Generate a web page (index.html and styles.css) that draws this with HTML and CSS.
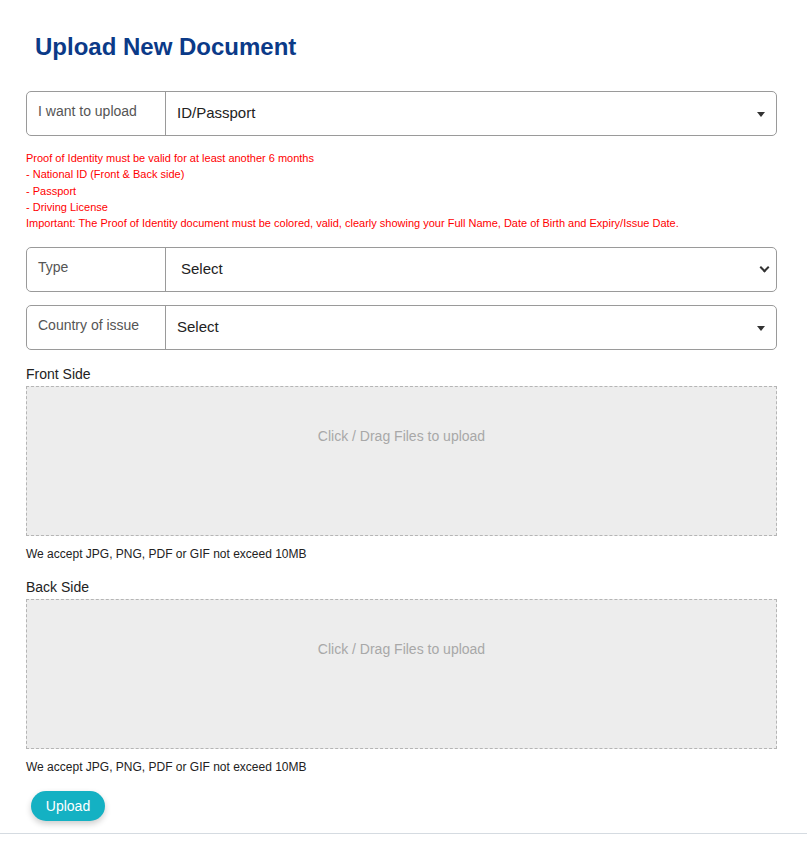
FILE: index.html
```html
<!DOCTYPE html>
<html lang="en">
<head>
    <meta charset="UTF-8">
    <meta name="viewport" content="width=device-width, initial-scale=1.0">
    <title>Upload New Document</title>
    <link rel="stylesheet" href="styles.css">
</head>
<body>
    <div class="page">
        <h1 class="title">Upload New Document</h1>

        <form class="upload-form">
            <!-- DOCUMENT KIND -->
            <div class="input-group">
                <span class="input-label">I want to upload</span>
                <div class="select-wrap caret">
                    <select class="select-plain">
                        <option>ID/Passport</option>
                        <option>Proof of Address</option>
                    </select>
                </div>
            </div>

            <div class="notice">
                <p>Proof of Identity must be valid for at least another 6 months</p>
                <p>- National ID (Front &amp; Back side)</p>
                <p>- Passport</p>
                <p>- Driving License</p>
                <p>Important: The Proof of Identity document must be colored, valid, clearly showing your Full Name, Date of Birth and Expiry/Issue Date.</p>
            </div>

            <div class="input-group">
                <span class="input-label">Type</span>
                <div class="select-wrap chevron">
                    <select class="select-plain select-native">
                        <option>Select</option>
                        <option>National ID</option>
                        <option>Passport</option>
                        <option>Driving License</option>
                    </select>
                </div>
            </div>

            <div class="input-group last">
                <span class="input-label">Country of issue</span>
                <div class="select-wrap caret">
                    <select class="select-plain">
                        <option>Select</option>
                    </select>
                </div>
            </div>

            <!-- FILE DROP ZONES -->
            <label class="field-label">Front Side</label>
            <div class="dropzone">Click / Drag Files to upload</div>
            <p class="hint">We accept JPG, PNG, PDF or GIF not exceed 10MB</p>

            <label class="field-label">Back Side</label>
            <div class="dropzone">Click / Drag Files to upload</div>
            <p class="hint hint-last">We accept JPG, PNG, PDF or GIF not exceed 10MB</p>

            <button type="submit" class="btn">Upload</button>
        </form>
    </div>
    <div class="footer-line"></div>
</body>
</html>
```

FILE: styles.css
```css
* { margin: 0; padding: 0; box-sizing: border-box; }
body {
    font-family: Arial, "Liberation Sans", sans-serif;
    background: #fff;
    color: #222;
}
.page { padding: 32px 30px 0 26px; }
.title {
    font-size: 24px;
    font-weight: bold;
    color: #0b3a88;
    margin-left: 9px;
    line-height: 30px;
    margin-bottom: 29px;
}
.input-group {
    display: flex;
    height: 45px;
    border: 1px solid #9a9a9a;
    border-radius: 5px;
    margin-bottom: 13px;
}
.input-group.last { margin-bottom: 16px; }
.input-label {
    width: 139px;
    flex-shrink: 0;
    border-right: 1px solid #9a9a9a;
    padding: 9px 11px;
    line-height: 20px;
    font-size: 14px;
    color: #555;
}
.select-wrap { flex: 1; position: relative; }
.select-plain {
    width: 100%;
    height: 100%;
    border: none;
    background: transparent;
    appearance: none;
    -webkit-appearance: none;
    font-family: inherit;
    font-size: 15px;
    color: #222;
    padding: 0 30px 2px 11px;
    outline: none;
    border-radius: 0 5px 5px 0;
}
.caret::after {
    content: "";
    position: absolute;
    right: 11px;
    top: 20px;
    border-left: 4px solid transparent;
    border-right: 4px solid transparent;
    border-top: 5px solid #333;
    pointer-events: none;
}
.select-native { padding-left: 15px; }
.chevron::after {
    content: "";
    position: absolute;
    right: 8px;
    top: 16px;
    width: 5px;
    height: 5px;
    border-right: 2px solid #333;
    border-bottom: 2px solid #333;
    transform: rotate(45deg);
    pointer-events: none;
}
.notice {
    color: #ff0000;
    font-size: 11px;
    line-height: 16.25px;
    height: 82px;
    margin: 14px 0 15px;
}
.field-label {
    display: block;
    font-size: 14px;
    line-height: 17px;
    margin-bottom: 3px;
}
.dropzone {
    height: 150px;
    background: #ededed;
    border: 1px dashed #b5b5b5;
    color: #a8a8a8;
    font-size: 14px;
    text-align: center;
    padding-top: 41px;
}
.hint {
    font-size: 12px;
    line-height: 16px;
    margin: 10px 0 17px;
}
.hint-last { margin-bottom: 16px; }
.btn {
    display: block;
    margin-left: 5px;
    width: 74px;
    height: 30px;
    background: #14b1c3;
    color: #fff;
    border: none;
    border-radius: 15px;
    font-family: inherit;
    font-size: 14px;
    box-shadow: 0 3px 6px rgba(0, 0, 0, 0.2);
    cursor: pointer;
}
.btn:hover { background: #0fa0b1; }
.footer-line {
    margin-top: 12px;
    height: 1px;
    background: #d5dbe1;
}
```
